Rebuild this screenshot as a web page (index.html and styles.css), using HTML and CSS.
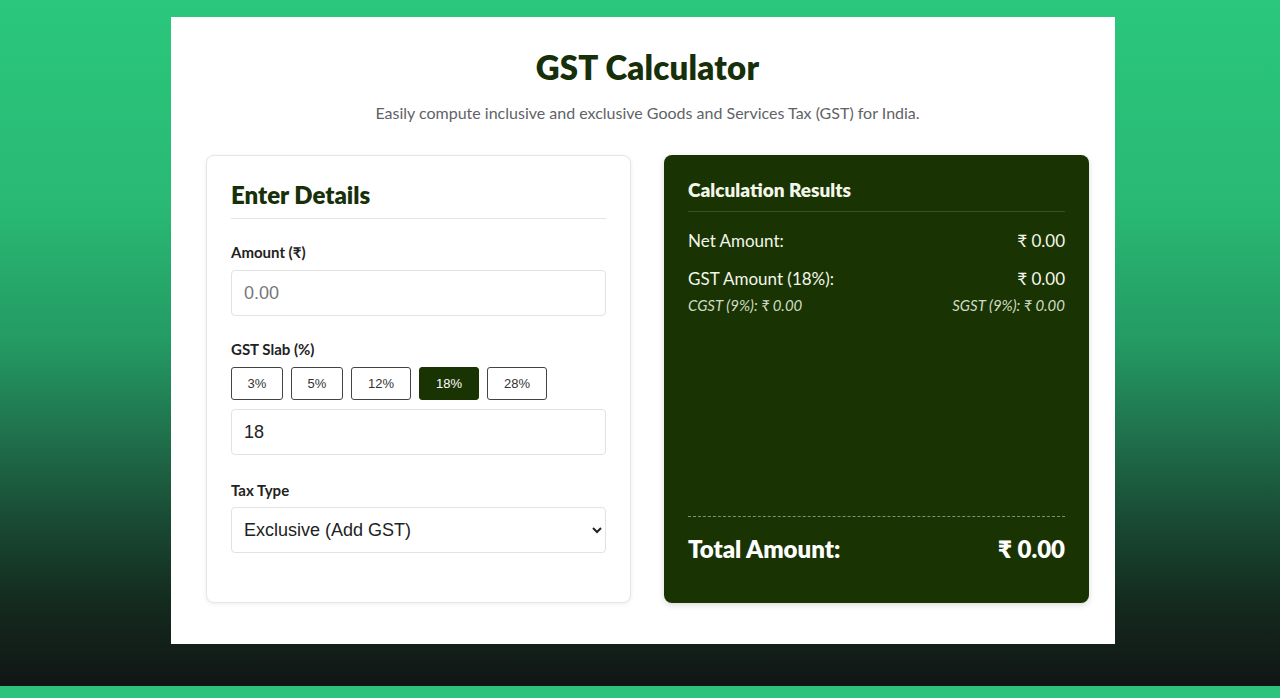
FILE: index.html
```html
<!DOCTYPE html>
<html lang="en">
<head>
<meta charset="utf-8">
<title>GST Calculator</title>
<link rel="stylesheet" href="styles.css">
</head>
<body>
<div class="page">
  <main class="card">
    <header class="head">
      <h1 class="title">GST Calculator</h1>
      <p class="subtitle">Easily compute inclusive and exclusive Goods and Services Tax (GST) for India.</p>
    </header>
    <div class="grid">
      <section class="panel form">
        <h2 class="panel-title">Enter Details</h2>
        <div class="field">
          <label class="label" for="amount">Amount (₹)</label>
          <input class="input" id="amount" type="text" placeholder="0.00">
        </div>
        <div class="field">
          <label class="label" for="rate">GST Slab (%)</label>
          <div class="slabs">
            <button class="slab">3%</button>
            <button class="slab">5%</button>
            <button class="slab wide">12%</button>
            <button class="slab wide active">18%</button>
            <button class="slab wide">28%</button>
          </div>
          <input class="input" id="rate" type="text" value="18">
        </div>
        <div class="field field-last">
          <label class="label" for="type">Tax Type</label>
          <select class="input select" id="type">
            <option>Exclusive (Add GST)</option>
            <option>Inclusive (Remove GST)</option>
          </select>
        </div>
      </section>
      <section class="panel results">
        <h3 class="res-title">Calculation Results</h3>
        <div class="row"><span>Net Amount:</span><span>₹ 0.00</span></div>
        <div class="row"><span>GST Amount (18%):</span><span>₹ 0.00</span></div>
        <div class="split"><span>CGST (9%): ₹ 0.00</span><span>SGST (9%): ₹ 0.00</span></div>
        <div class="total"><span>Total Amount:</span><span>₹ 0.00</span></div>
      </section>
    </div>
  </main>
</div>
</body>
</html>
```
FILE: styles.css
```css
html {
  background: #2cc47d;
}
body {
  margin: 0;
  font-family: "Lato", "Noto Sans", sans-serif;
  color: #1b2a12;
}
.page {
  min-height: 686px;
  background: linear-gradient(180deg, #2ac77c 0%, #29b974 30%, #249a63 50%, #1f6f4b 64%, #194a33 76%, #142a1f 88%, #111514 100%);
  padding-top: 17px;
  box-sizing: border-box;
}
.card {
  width: 944px;
  height: 627px;
  margin: 0 0 0 171px;
  background: #fff;
  box-sizing: border-box;
  padding: 0 26px 0 35px;
}
.head {
  text-align: center;
  padding-top: 31px;
}
.title {
  margin: 0;
  font-size: 33px;
  font-weight: 800;
  line-height: 38px;
  color: #17300a;
  letter-spacing: 0.2px;
}
.subtitle {
  margin: 17px 0 0;
  font-size: 16px;
  line-height: 20px;
  color: #5f6368;
}
.grid {
  display: grid;
  grid-template-columns: 1fr 1fr;
  gap: 33px;
  margin-top: 32px;
}
.panel {
  height: 448px;
  box-sizing: border-box;
  border-radius: 8px;
  padding: 24px;
}
.form {
  border: 1px solid #e6e6e6;
  box-shadow: 0 1px 4px rgba(0, 0, 0, 0.08);
  background: #fff;
}
.panel-title {
  margin: 0;
  font-size: 24px;
  font-weight: 800;
  line-height: 30px;
  color: #17300a;
  padding-bottom: 8px;
  border-bottom: 1px solid #e4e4e4;
}
.field {
  margin-top: 23px;
}
.field-last {
  margin-top: 25px;
}
.label {
  display: block;
  font-size: 15px;
  font-weight: 700;
  line-height: 20px;
  color: #222;
  margin-bottom: 8px;
}
.field-last .label {
  margin-bottom: 7px;
}
.input {
  display: block;
  width: 100%;
  height: 46px;
  box-sizing: border-box;
  border: 1px solid #e2e2e2;
  border-radius: 4px;
  padding: 0 12px;
  font-family: "Liberation Sans", Arial, sans-serif;
  font-size: 18px;
  color: #222;
  background: #fff;
}
.input::placeholder {
  color: #777;
}
.select {
  padding: 0 8px;
}
.slabs {
  display: flex;
  gap: 8px;
  margin-bottom: 9px;
}
.slab {
  width: 52px;
  height: 33px;
  box-sizing: border-box;
  border: 1px solid #444;
  border-radius: 3px;
  background: #fff;
  font-family: "Liberation Sans", Arial, sans-serif;
  font-size: 13px;
  color: #333;
  padding: 0;
}
.slab.wide {
  width: 60px;
}
.slab.active {
  background: #1a3303;
  border-color: #1a3303;
  color: #fff;
}
.results {
  background: #1a3303;
  color: #f2f7ea;
  display: flex;
  flex-direction: column;
  box-shadow: 0 2px 6px rgba(0, 0, 0, 0.15);
}
.res-title {
  margin: 0;
  font-size: 19px;
  font-weight: 800;
  line-height: 22px;
  padding-bottom: 10px;
  border-bottom: 1px solid rgba(255, 255, 255, 0.14);
}
.row {
  display: flex;
  justify-content: space-between;
  font-size: 17px;
  line-height: 22px;
  margin-top: 18px;
}
.row + .row {
  margin-top: 16px;
}
.split {
  display: flex;
  justify-content: space-between;
  font-size: 15px;
  font-style: italic;
  line-height: 18px;
  margin-top: 6px;
  color: #cfdcc2;
}
.total {
  margin-top: auto;
  display: flex;
  justify-content: space-between;
  border-top: 1px dashed rgba(255, 255, 255, 0.45);
  padding-top: 18px;
  margin-bottom: 16px;
  font-size: 24px;
  font-weight: 800;
  line-height: 28px;
  color: #fff;
}
```
